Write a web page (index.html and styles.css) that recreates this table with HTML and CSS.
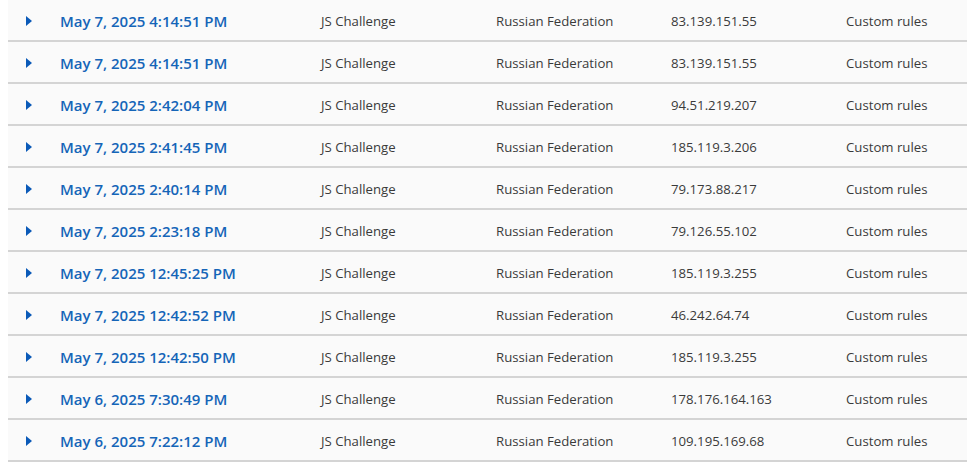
FILE: index.html
```html
<!DOCTYPE html>
<html>
<head>
<meta charset="utf-8">
<link rel="stylesheet" href="styles.css">
</head>
<body>
<div class="table">
  <div class="row"><span class="toggle"></span><a class="date">May 7, 2025 4:14:51 PM</a><span>JS Challenge</span><span>Russian Federation</span><span>83.139.151.55</span><span>Custom rules</span></div>
  <div class="row"><span class="toggle"></span><a class="date">May 7, 2025 4:14:51 PM</a><span>JS Challenge</span><span>Russian Federation</span><span>83.139.151.55</span><span>Custom rules</span></div>
  <div class="row"><span class="toggle"></span><a class="date">May 7, 2025 2:42:04 PM</a><span>JS Challenge</span><span>Russian Federation</span><span>94.51.219.207</span><span>Custom rules</span></div>
  <div class="row"><span class="toggle"></span><a class="date">May 7, 2025 2:41:45 PM</a><span>JS Challenge</span><span>Russian Federation</span><span>185.119.3.206</span><span>Custom rules</span></div>
  <div class="row"><span class="toggle"></span><a class="date">May 7, 2025 2:40:14 PM</a><span>JS Challenge</span><span>Russian Federation</span><span>79.173.88.217</span><span>Custom rules</span></div>
  <div class="row"><span class="toggle"></span><a class="date">May 7, 2025 2:23:18 PM</a><span>JS Challenge</span><span>Russian Federation</span><span>79.126.55.102</span><span>Custom rules</span></div>
  <div class="row"><span class="toggle"></span><a class="date">May 7, 2025 12:45:25 PM</a><span>JS Challenge</span><span>Russian Federation</span><span>185.119.3.255</span><span>Custom rules</span></div>
  <div class="row"><span class="toggle"></span><a class="date">May 7, 2025 12:42:52 PM</a><span>JS Challenge</span><span>Russian Federation</span><span>46.242.64.74</span><span>Custom rules</span></div>
  <div class="row"><span class="toggle"></span><a class="date">May 7, 2025 12:42:50 PM</a><span>JS Challenge</span><span>Russian Federation</span><span>185.119.3.255</span><span>Custom rules</span></div>
  <div class="row"><span class="toggle"></span><a class="date">May 6, 2025 7:30:49 PM</a><span>JS Challenge</span><span>Russian Federation</span><span>178.176.164.163</span><span>Custom rules</span></div>
  <div class="row"><span class="toggle"></span><a class="date">May 6, 2025 7:22:12 PM</a><span>JS Challenge</span><span>Russian Federation</span><span>109.195.169.68</span><span>Custom rules</span></div>
</div>
</body>
</html>
```
FILE: styles.css
```css
html, body {
  margin: 0;
  padding: 0;
  background: #fff;
  overflow: hidden;
}
body {
  font-family: "Open Sans", "Noto Sans", sans-serif;
  color: #3a3a3a;
}
.table {
  margin-left: 8px;
}
.row {
  display: grid;
  grid-template-columns: 52px 261px 175px 175px 175px 1fr;
  align-items: center;
  box-sizing: content-box;
  height: 39px;
  padding-top: 1px;
  background: #fafafa;
  border-bottom: 2px solid #d4d4d4;
  font-size: 13.2px;
  white-space: nowrap;
}
.toggle {
  justify-self: start;
  margin-left: 18px;
  width: 0;
  height: 0;
  border-top: 5px solid transparent;
  border-bottom: 5px solid transparent;
  border-left: 6px solid #0b5ab8;
}
.date {
  color: #1565b8;
  font-weight: 600;
  font-size: 15px;
}
```
